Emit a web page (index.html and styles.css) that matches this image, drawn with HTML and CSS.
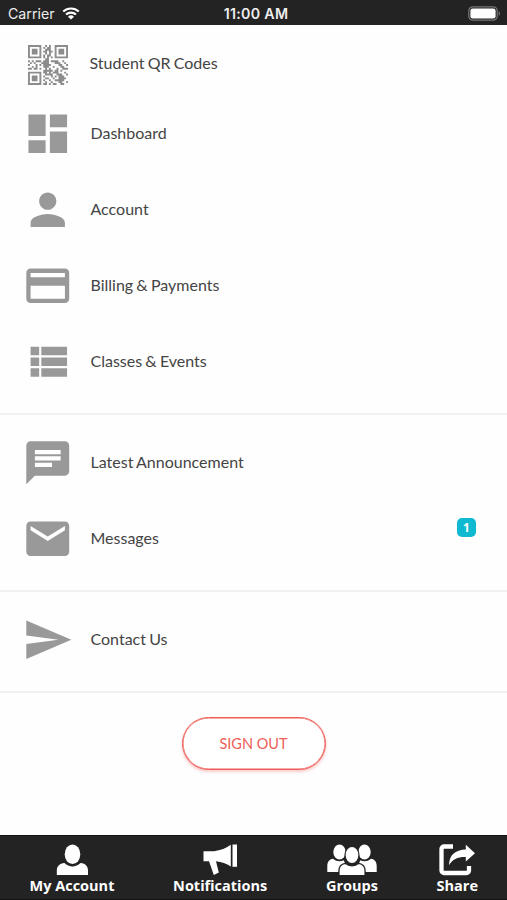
FILE: index.html
```html
<!DOCTYPE html>
<html lang="en">
<head>
  <meta charset="UTF-8">
  <meta name="viewport" content="width=device-width, initial-scale=1">
  <title>My Account</title>
  <link rel="stylesheet" href="styles.css">
</head>
<body>
  <header class="status-bar">
    <div class="carrier">
      <span>Carrier</span>
      <svg class="wifi" viewBox="0 0 18 13">
        <path d="M1.2 4.6a11.2 11.2 0 0 1 15.6 0M4 7.6a7.2 7.2 0 0 1 10 0" fill="none" stroke="#fff" stroke-width="2.1"/>
        <path d="M9 12.6L6 9.7a4.3 4.3 0 0 1 6 0z" fill="#fff"/>
      </svg>
    </div>
    <div class="time">11:00 AM</div>
    <div class="power">
      <svg class="battery" viewBox="0 0 33 15">
        <rect x=".8" y=".8" width="28.4" height="13.4" rx="4" fill="none" stroke="#777" stroke-width="1.2"/>
        <rect x="2.4" y="2.4" width="25.2" height="10.2" rx="2.4" fill="#fff"/>
        <path d="M30.6 5.2c1.7.7 1.7 3.9 0 4.6z" fill="#777"/>
      </svg>
    </div>
  </header>

  <main class="menu">
    <ul class="menu-group">
      <li class="menu-item qr-item">
        <svg class="qr-icon" viewBox="0 0 21 21">
          <path fill="none" stroke="currentColor" stroke-width="1" d="M0 .5h7M14 .5h7M0 6.5h7M14 6.5h7M0 14.5h7M0 20.5h7M.5 1v5M6.5 1v5M14.5 1v5M20.5 1v5M.5 15v5M6.5 15v5"/>
          <path fill="currentColor" d="M2 2h3v3H2zM16 2h3v3h-3zM2 16h3v3H2z"/>
          <path fill="none" stroke="currentColor" stroke-width="1" d="M9 .5h1M11 .5h1M8 1.5h1M10 1.5h2M9 2.5h3M8 3.5h2M11 3.5h2M9 4.5h1M11 4.5h1M8 5.5h1M10 5.5h2M8 6.5h1M10 6.5h1M12 6.5h1M9 7.5h2
            M0 8.5h1M2 8.5h1M4 8.5h3M8 8.5h3M12 8.5h4M18 8.5h1M1 9.5h1M3 9.5h1M7 9.5h4M14 9.5h3M19 9.5h1M0 10.5h1M4 10.5h1M6 10.5h1M8 10.5h4M16 10.5h2M20 10.5h1M2 11.5h1M4 11.5h1M8 11.5h3M13 11.5h1M17 11.5h2M0 12.5h2M3 12.5h2M6 12.5h1M9 12.5h1M11 12.5h1M15 12.5h1M18 12.5h3
            M8 13.5h5M14 13.5h2M17 13.5h1M8 14.5h2M11 14.5h1M13 14.5h3M19 14.5h1M9 15.5h4M15 15.5h3M20 15.5h1M8 16.5h1M12 16.5h1M14 16.5h1M16 16.5h3M9 17.5h2M13 17.5h1M16 17.5h4M8 18.5h1M11 18.5h1M14 18.5h5M9 19.5h1M12 19.5h1M16 19.5h2M20 19.5h1M8 20.5h2M11 20.5h1M13 20.5h2M17 20.5h2"/>
        </svg>
        <span class="label">Student QR Codes</span>
      </li>
      <li class="menu-item">
        <svg class="icon" viewBox="0 0 24 24"><path d="M3 13h8V3H3v10zm0 8h8v-6H3v6zm10 0h8V11h-8v10zm0-18v6h8V3h-8z"/></svg>
        <span class="label">Dashboard</span>
      </li>
      <li class="menu-item">
        <svg class="icon" viewBox="0 0 24 24"><path d="M12 12c2.21 0 4-1.79 4-4s-1.79-4-4-4-4 1.79-4 4 1.79 4 4 4zm0 2c-2.67 0-8 1.34-8 4v2h16v-2c0-2.66-5.33-4-8-4z"/></svg>
        <span class="label">Account</span>
      </li>
      <li class="menu-item">
        <svg class="icon" viewBox="0 0 24 24"><path d="M20 4H4c-1.11 0-1.99.89-1.99 2L2 18c0 1.11.89 2 2 2h16c1.11 0 2-.89 2-2V6c0-1.11-.89-2-2-2zm0 14H4v-6h16v6zm0-10H4V6h16v2z"/></svg>
        <span class="label">Billing &amp; Payments</span>
      </li>
      <li class="menu-item">
        <svg class="icon" viewBox="0 0 24 24"><path d="M4 14h4v-4H4v4zm0 5h4v-4H4v4zM4 9h4V5H4v4zm5 5h12v-4H9v4zm0 5h12v-4H9v4zM9 5v4h12V5H9z"/></svg>
        <span class="label">Classes &amp; Events</span>
      </li>
    </ul>

    <ul class="menu-group">
      <li class="menu-item">
        <svg class="icon" viewBox="0 0 24 24"><path d="M20 2H4c-1.1 0-1.99.9-1.99 2L2 22l4-4h14c1.1 0 2-.9 2-2V4c0-1.1-.9-2-2-2zM6 9h12v2H6V9zm8 5H6v-2h8v2zm4-6H6V6h12v2z"/></svg>
        <span class="label">Latest Announcement</span>
      </li>
      <li class="menu-item">
        <svg class="icon" viewBox="0 0 24 24"><path d="M20 4H4c-1.1 0-1.99.9-1.99 2L2 18c0 1.1.9 2 2 2h16c1.1 0 2-.9 2-2V6c0-1.1-.9-2-2-2zm0 4l-8 5-8-5V6l8 5 8-5v2z"/></svg>
        <span class="label">Messages</span>
        <span class="badge">1</span>
      </li>
    </ul>

    <ul class="menu-group">
      <li class="menu-item">
        <svg class="icon" viewBox="0 0 24 24"><path d="M2.01 21L23 12 2.01 3 2 10l15 2-15 2z"/></svg>
        <span class="label">Contact Us</span>
      </li>
    </ul>

    <button class="sign-out">SIGN OUT</button>
  </main>

  <nav class="tab-bar">
    <a class="tab">
      <svg width="32" height="32" viewBox="0 0 32 32">
        <ellipse cx="16.500" cy="10.3" rx="7.8" ry="9.8"/>
        <path d="M.8 31v-4.500c0-4 2.500-7 7.700-7.500 4.500 4.500 11.500 4.500 16 0 5.200.5 7.500 3.500 7.500 7.500V31z"/>
      </svg>
      <span>My Account</span>
    </a>
    <a class="tab">
      <svg width="34" height="32" viewBox="-.5 0 34 32">
        <path d="M0 7.200h10.500C17 6.500 23 4 27.300.8v21.700C23 19.500 18 17.800 12.500 17.200l2.800 11.300-5 2.500L5.500 17.200H0z"/>
        <path d="M29 .5h4.500v22.300H29z"/>
      </svg>
      <span>Notifications</span>
    </a>
    <a class="tab">
      <svg width="50" height="32" viewBox="0 0 50 32">
        <ellipse cx="12.500" cy="8" rx="6.200" ry="7.600"/>
        <ellipse cx="37.500" cy="8" rx="6.200" ry="7.600"/>
        <path d="M.3 28v-6c0-4 2-6.500 5.700-7.200 3 2.800 7.500 3.200 10.500 1.500L18 19c-4 1.500-6 4.500-6.500 9z"/>
        <path d="M49.700 28v-6c0-4-2-6.500-5.700-7.200-3 2.800-7.500 3.200-10.500 1.500L32 19c4 1.500 6 4.500 6.500 9z"/>
        <ellipse class="front" cx="25" cy="11" rx="7" ry="8.600"/>
        <path class="front" d="M12 31.500v-5c0-4 2.200-6.500 6.200-7.200 3.900 3.300 9.700 3.300 13.600 0 4 .7 6.200 3.200 6.200 7.200v5z"/>
      </svg>
      <span>Groups</span>
    </a>
    <a class="tab">
      <svg width="36" height="32" viewBox="0 0 36 32">
        <path d="M14 2.500H5a2.500 2.500 0 0 0-2.500 2.500v21.500A2.500 2.500 0 0 0 5 29h22.500a2.500 2.500 0 0 0 2.500-2.500V22" fill="none" stroke="#fff" stroke-width="4.300"/>
        <path d="M10 21.300C10.200 11 16 5.800 26.800 5.500V.8L36 9.300 26.800 17.500V13C19 12.800 13.500 15 10 21.300z"/>
      </svg>
      <span>Share</span>
    </a>
  </nav>
</body>
</html>
```

FILE: styles.css
```css
* {
  margin: 0;
  padding: 0;
  box-sizing: border-box;
}
body {
  height: 100vh;
  display: flex;
  flex-direction: column;
  background-color: #fefefe;
  color: #444;
  font-family: Lato, sans-serif;
  overflow: hidden;
}

/* status bar */
.status-bar {
  height: 25px;
  display: grid;
  grid-template-columns: 1fr auto 1fr;
  align-items: center;
  padding: 2px 6px 0 8px;
  background-color: #232323;
  color: #eee;
  font-family: Inter, sans-serif;
  font-size: 14.2px;
}
.carrier {
  display: flex;
  align-items: center;
  gap: 7px;
}
.wifi {
  width: 18px;
  height: 13px;
}
.time {
  padding-left: 3px;
  font-weight: 600;
  letter-spacing: 0.3px;
}
.power {
  display: flex;
  justify-content: flex-end;
}
.battery {
  width: 33px;
  height: 15px;
}

/* menu */
.menu {
  flex: 1;
}
.menu-group {
  list-style: none;
  padding: 10px 0 13px;
  border-bottom: 2px solid #f1f1f1;
}
.menu-group:first-child {
  padding-top: 0;
}
.menu-item {
  height: 76px;
  display: flex;
  align-items: center;
  padding: 0 31px 0 21.5px;
}
.icon {
  width: 51.5px;
  height: 51.5px;
  margin-right: 17.5px;
  fill: #999;
}
.label {
  padding-bottom: 4px;
  font-size: 16px;
  word-spacing: -0.9px;
}
.qr-item {
  height: 71px;
  padding-top: 8px;
  padding-left: 27.5px;
}
.qr-icon {
  width: 40px;
  height: 40px;
  margin-right: 22px;
  color: #8c8c8c;
}
.badge {
  width: 19px;
  height: 19px;
  margin: 0 0 24px auto;
  border-radius: 5px;
  background-color: #0fb9d0;
  color: #fff;
  font-family: "Open Sans", sans-serif;
  font-size: 12px;
  font-weight: 700;
  line-height: 19px;
  text-align: center;
}
.sign-out {
  display: block;
  width: 144px;
  height: 53px;
  margin: 24px auto 0;
  border: 1px solid #ee5d57;
  border-radius: 27px;
  background-color: #fff;
  box-shadow: inset 0 0 0 0.5px #ee5d57, 0 2px 3px rgba(238, 93, 87, 0.3);
  color: #ee5d57;
  font-family: inherit;
  font-size: 14.5px;
}

/* bottom tabs */
.tab-bar {
  height: 65px;
  display: flex;
  justify-content: space-between;
  padding: 8px 29px 0 29.5px;
  background-color: #232323;
  border-top: 1px solid #111;
  border-bottom: 1px solid #111;
}
.tab {
  display: flex;
  flex-direction: column;
  align-items: center;
  color: #fff;
  font-family: "Open Sans", sans-serif;
  font-size: 14.5px;
  font-weight: 700;
  line-height: 20px;
}
.tab svg {
  fill: #fff;
}
.tab .front {
  stroke: #232323;
  stroke-width: 1.2;
}
```
